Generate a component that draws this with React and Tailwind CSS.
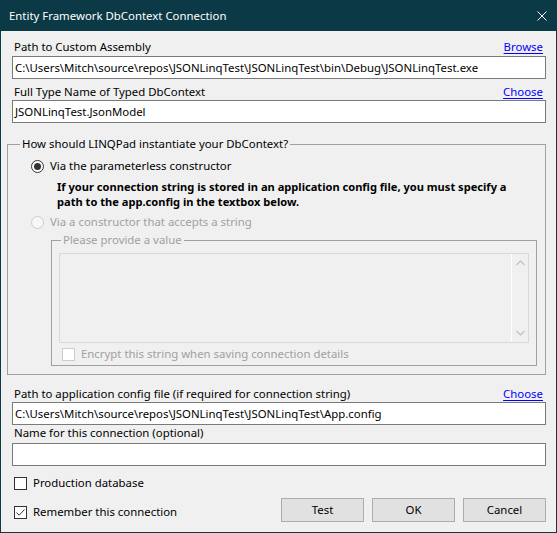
import React from "react";

function LinkRow({ label, link, className = "" }) {
  return (
    <div className={`flex justify-between items-center h-[16px] pl-[2px] pr-[3px] ${className}`}>
      <span>{label}</span>
      {link && <span className="text-[#0000ff] underline underline-offset-[2px]">{link}</span>}
    </div>
  );
}

function TextBox({ value = "", className = "" }) {
  return (
    <div className={`h-[23px] border border-[#7a7a7a] bg-white flex items-center pl-[2px] whitespace-nowrap overflow-hidden ${className}`}>
      {value}
    </div>
  );
}

function CheckBox({ checked = false, disabled = false }) {
  return (
    <div
      className={`w-[13px] h-[13px] border flex items-center justify-center ${
        disabled ? "border-[#cccccc] bg-white" : "border-[#333333] bg-white"
      }`}
    >
      {checked && (
        <svg width="11" height="11" viewBox="0 0 11 11">
          <path d="M1.5 5.5 L4.2 8.2 L9.5 2.5" fill="none" stroke="#333333" strokeWidth="1" />
        </svg>
      )}
    </div>
  );
}

function Radio({ checked = false, disabled = false }) {
  return (
    <div
      className={`w-[13px] h-[13px] rounded-full border flex items-center justify-center shrink-0 ${
        disabled ? "border-[#cccccc] bg-[#f7f7f7]" : "border-[#333333] bg-white"
      }`}
    >
      {checked && <div className="w-[7px] h-[7px] rounded-full bg-[#333333]" />}
    </div>
  );
}

function Button({ children }) {
  return (
    <div className="w-[83px] h-[24px] border border-[#adadad] bg-[#e1e1e1] flex items-center justify-center">
      {children}
    </div>
  );
}

export default function App() {
  return (
    <div className="w-[557px] h-[533px] bg-[#0b3946] flex flex-col font-['Noto_Sans',sans-serif] text-[11.4px] leading-[16px] text-black">
      {/* title bar */}
      <div className="h-[31px] shrink-0 flex items-center justify-between pl-[9px] pr-[10px] text-white">
        <span>Entity Framework DbContext Connection</span>
        <svg width="10" height="10" viewBox="0 0 10 10">
          <path d="M0.5 0.5 L9.5 9.5 M9.5 0.5 L0.5 9.5" stroke="#ffffff" strokeWidth="1" />
        </svg>
      </div>

      {/* client area */}
      <div className="flex-1 mx-[1px] mb-[1px] bg-[#f0f0f0] flex flex-col pl-[11px] pr-[10px] pt-[8px]">
        <LinkRow label="Path to Custom Assembly" link="Browse" />
        <TextBox
          className="mt-[1px]"
          value="C:\Users\Mitch\source\repos\JSONLinqTest\JSONLinqTest\bin\Debug\JSONLinqTest.exe"
        />
        <LinkRow className="mt-[5px]" label="Full Type Name of Typed DbContext" link="Choose" />
        <TextBox value="JSONLinqTest.JsonModel" />

        {/* instantiation options */}
        <fieldset className="mt-[13px] ml-[-5px] border border-[#a0a0a0] pb-[8px]">
          <legend className="ml-[12px] px-[2px]">How should LINQPad instantiate your DbContext?</legend>
          <div className="mt-[6px] ml-[23px] flex items-center gap-[6px] h-[16px]">
            <Radio checked />
            <span>Via the parameterless constructor</span>
          </div>
          <div className="mt-[5px] ml-[49px] font-bold text-[11.1px] leading-[15px]">
            If your connection string is stored in an application config file, you must specify a
            <br />
            path to the app.config in the textbox below.
          </div>
          <div className="mt-[5px] ml-[23px] flex items-center gap-[6px] h-[16px] text-[#a0a0a0]">
            <Radio disabled />
            <span>Via a constructor that accepts a string</span>
          </div>

          <fieldset className="mt-[2px] ml-[43px] mr-[8px] border border-[#a0a0a0] pb-[3px]">
            <legend className="ml-[9px] px-[2px] text-[#a0a0a0]">Please provide a value</legend>
            <div className="mt-[5px] mx-[7px] h-[90px] border border-[#d9d9d9] bg-[#f0f0f0] flex justify-end">
              <div className="w-[17px] border-l border-white flex flex-col items-center justify-between py-[6px]">
                <svg width="9" height="6" viewBox="0 0 9 6">
                  <path d="M0.5 5 L4.5 1 L8.5 5" fill="none" stroke="#c4c4c4" strokeWidth="1.3" />
                </svg>
                <svg width="9" height="6" viewBox="0 0 9 6">
                  <path d="M0.5 1 L4.5 5 L8.5 1" fill="none" stroke="#c4c4c4" strokeWidth="1.3" />
                </svg>
              </div>
            </div>
            <div className="mt-[3px] ml-[10px] flex items-center gap-[6px] h-[16px] text-[#a0a0a0]">
              <CheckBox disabled />
              <span>Encrypt this string when saving connection details</span>
            </div>
          </fieldset>
        </fieldset>

        <LinkRow
          className="mt-[11px]"
          label="Path to application config file (if required for connection string)"
          link="Choose"
        />
        <TextBox value="C:\Users\Mitch\source\repos\JSONLinqTest\JSONLinqTest\App.config" />
        <LinkRow label="Name for this connection (optional)" />
        <TextBox className="mt-[2px]" />

        <div className="flex justify-between items-end mt-[9px]">
          <div className="flex flex-col gap-[13px] pl-[2px]">
            <div className="flex items-center gap-[6px] h-[16px]">
              <CheckBox />
              <span>Production database</span>
            </div>
            <div className="flex items-center gap-[6px] h-[16px]">
              <CheckBox checked />
              <span>Remember this connection</span>
            </div>
          </div>
          <div className="flex gap-[8px] mb-[-2px]">
            <Button>Test</Button>
            <Button>OK</Button>
            <Button>Cancel</Button>
          </div>
        </div>
      </div>
    </div>
  );
}
